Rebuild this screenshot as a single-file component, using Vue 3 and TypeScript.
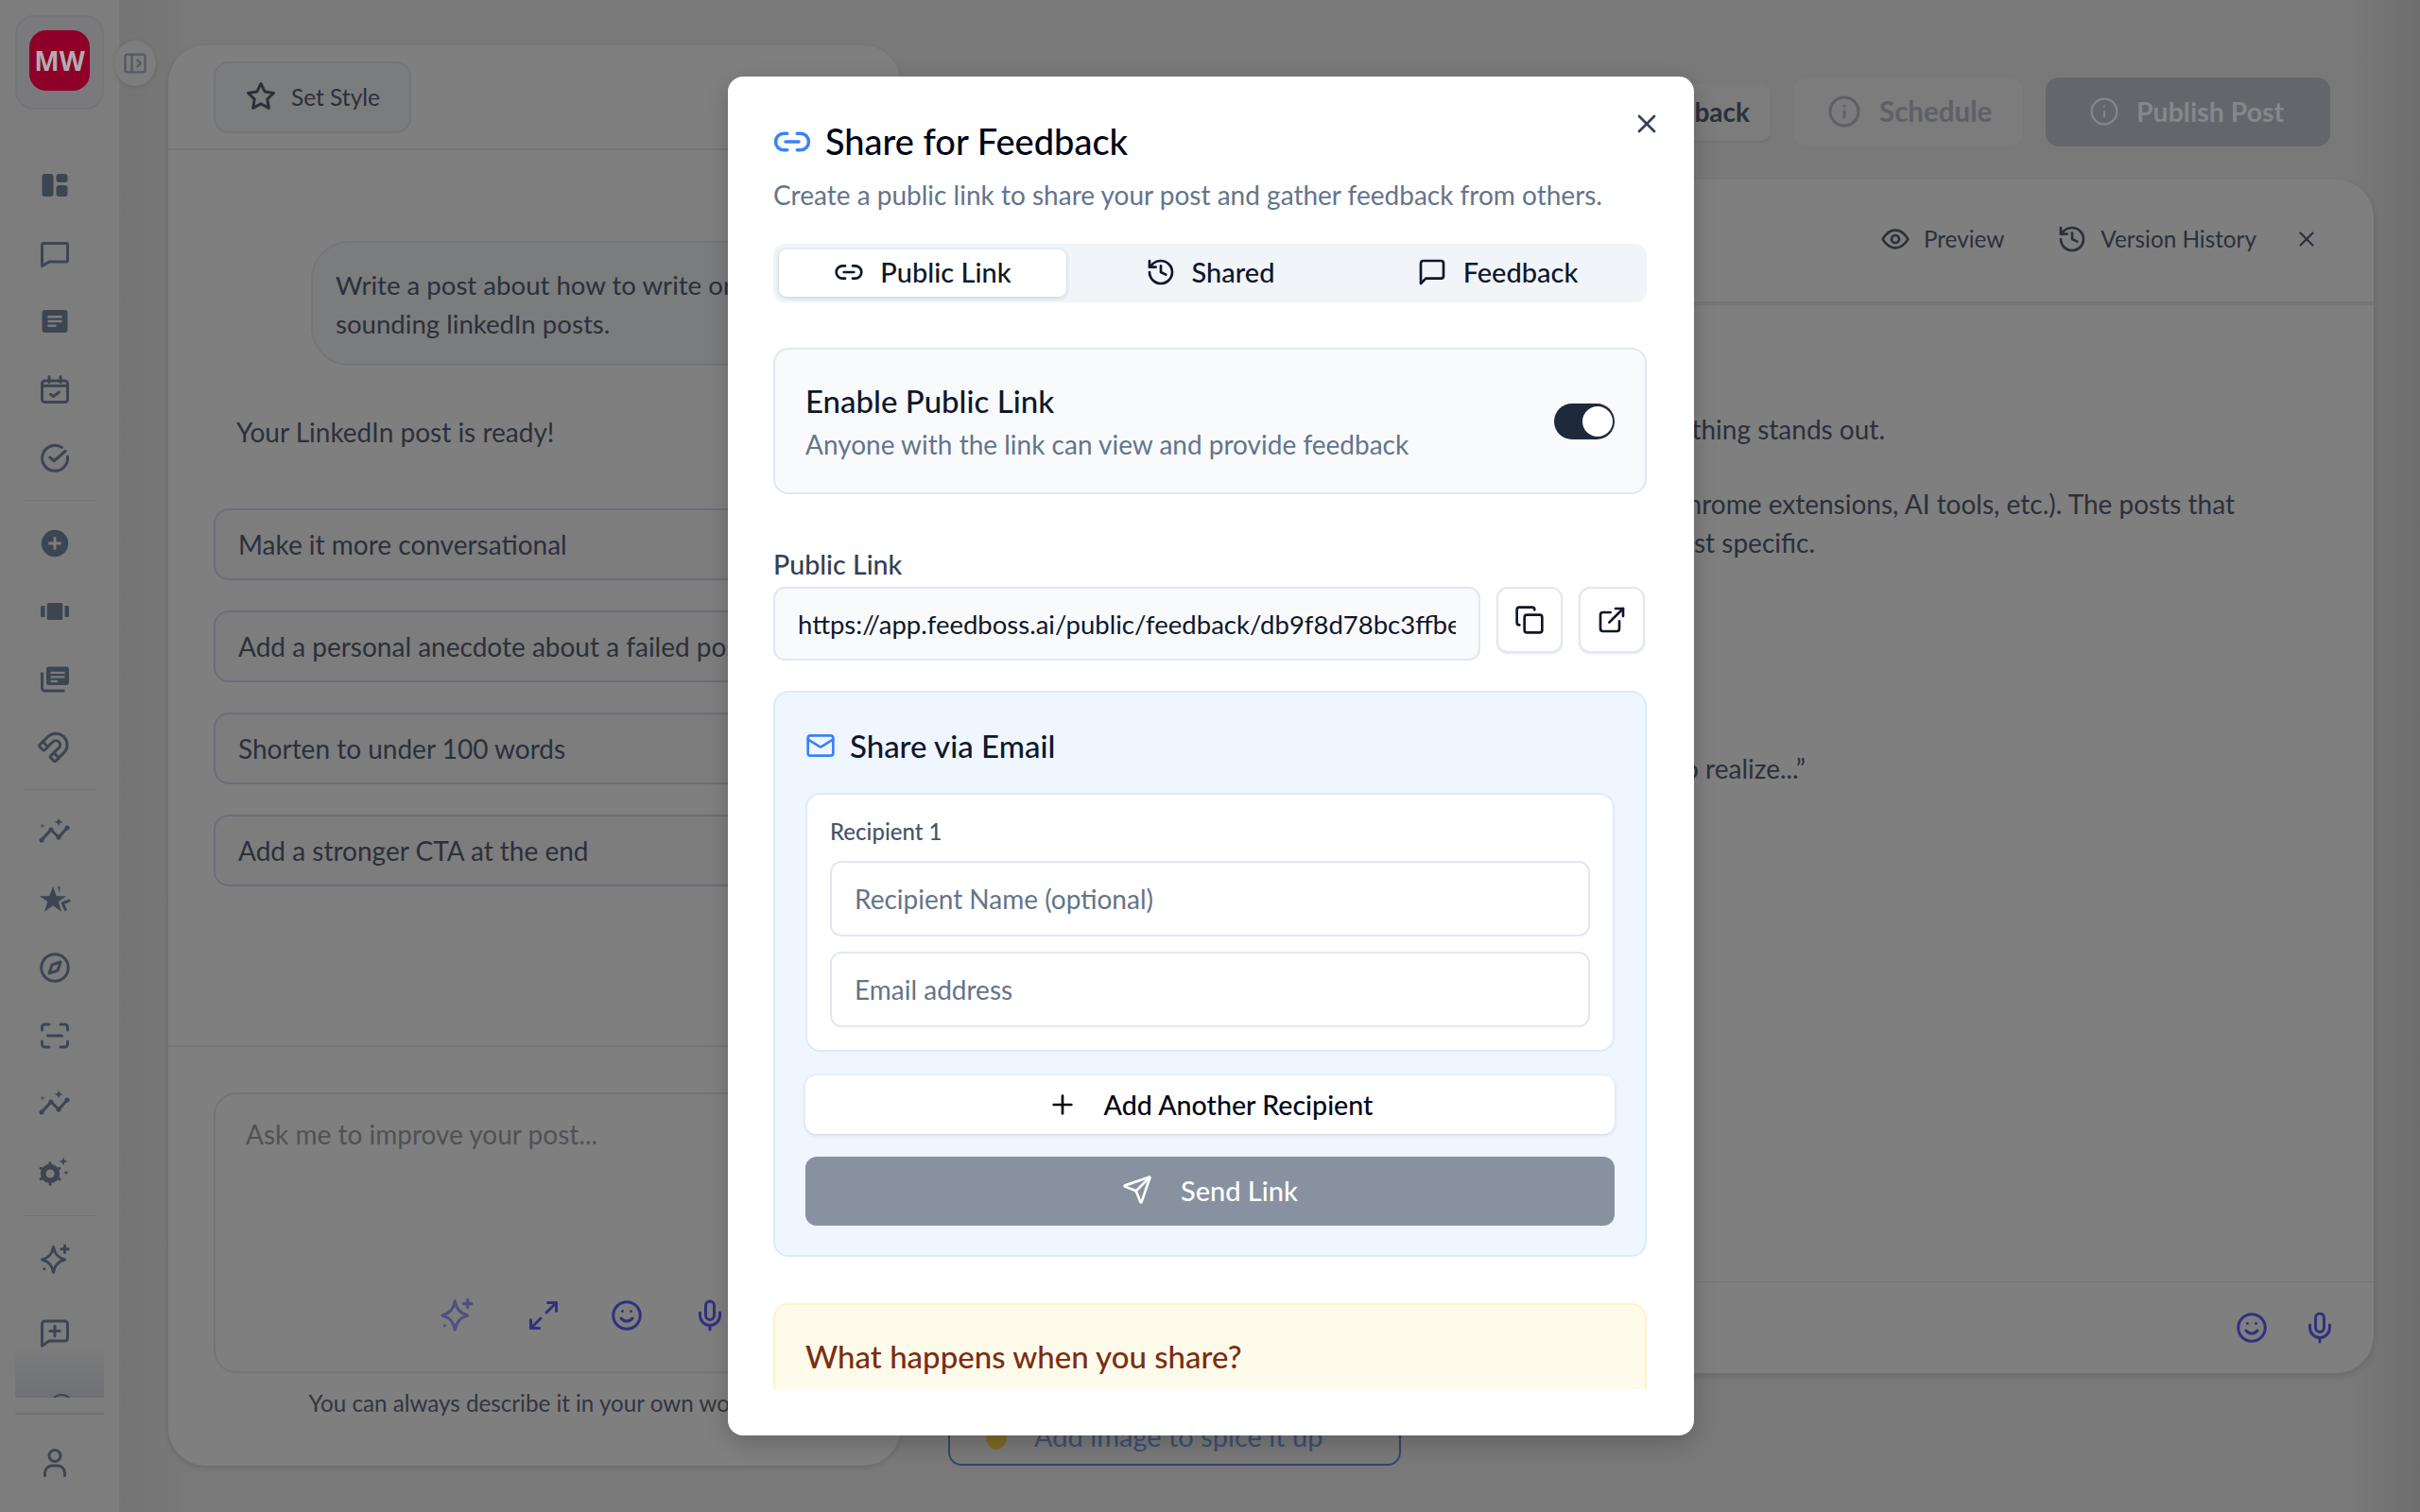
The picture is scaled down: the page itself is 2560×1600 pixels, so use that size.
<script setup lang="ts">
import { h } from 'vue'

type IconDef = { s?: string[]; f?: string[]; t?: string }

const icons: Record<string, IconDef> = {
  dashboard: { f: ['M5 4h4a2 2 0 0 1 2 2v12a2 2 0 0 1-2 2H5a2 2 0 0 1-2-2V6a2 2 0 0 1 2-2z', 'M15 4h4a2 2 0 0 1 2 2v2a2 2 0 0 1-2 2h-4a2 2 0 0 1-2-2V6a2 2 0 0 1 2-2z', 'M15 12h4a2 2 0 0 1 2 2v4a2 2 0 0 1-2 2h-4a2 2 0 0 1-2-2v-4a2 2 0 0 1 2-2z'] },
  message: { s: ['M4 5h16a1 1 0 0 1 1 1v11a1 1 0 0 1-1 1H8l-5 3V6a1 1 0 0 1 1-1z'] },
  article: { f: ['M5 4h14a2 2 0 0 1 2 2v12a2 2 0 0 1-2 2H5a2 2 0 0 1-2-2V6a2 2 0 0 1 2-2z M7 8v1.6h10V8z M7 11.2v1.6h10v-1.6z M7 14.4V16h6v-1.6z'] },
  calendar: { s: ['M5 6h14a2 2 0 0 1 2 2v11a2 2 0 0 1-2 2H5a2 2 0 0 1-2-2V8a2 2 0 0 1 2-2z', 'M8 3v4M16 3v4', 'M3 9.5h18', 'm9 15.5 2 1.5 4-3'] },
  circleCheck: { s: ['M21 11.5a9 9 0 1 1-4-6.5', 'M8.5 12l3 2.5 8-7'] },
  circlePlus: { f: ['M12 2.5a9.5 9.5 0 1 0 0 19 9.5 9.5 0 0 0 0-19z M11 7.5h2v3.5h3.5v2H13v3.5h-2V13H7.5v-2H11z'] },
  carousel: { f: ['M7.5 6h9a1 1 0 0 1 1 1v10a1 1 0 0 1-1 1h-9a1 1 0 0 1-1-1V7a1 1 0 0 1 1-1z', 'M3 8h2v8H3a1 1 0 0 1-1-1V9a1 1 0 0 1 1-1z', 'M19 8h2a1 1 0 0 1 1 1v6a1 1 0 0 1-1 1h-2z'] },
  news: { f: ['M8 3h12a2 2 0 0 1 2 2v9a2 2 0 0 1-2 2H8a2 2 0 0 1-2-2V5a2 2 0 0 1 2-2z M9 6.5V8h10V6.5z M9 9.5V11h10V9.5z M9 12.5V14h5v-1.5z', 'M2 7h2v11a1 1 0 0 0 1 1h14v2H5a3 3 0 0 1-3-3z'] },
  magnet: { t: 'translate(0 -1.2) rotate(225 12 12)', s: ['M4 13V5a1 1 0 0 1 1-1h3a1 1 0 0 1 1 1v8a2 2 0 0 0 6 0V5a1 1 0 0 1 1-1h3a1 1 0 0 1 1 1v8a8 8 0 0 1-16 0', 'M4 8h5', 'M15 8h5'] },
  chart: {
    s: ['M2.7 18 9.3 10.7 14.7 16 20.7 9.3'],
    f: [
      'M2.7 16.3a1.7 1.7 0 1 0 0 3.4 1.7 1.7 0 0 0 0-3.4z',
      'M9.3 9a1.7 1.7 0 1 0 0 3.4 1.7 1.7 0 0 0 0-3.4z',
      'M14.7 14.3a1.7 1.7 0 1 0 0 3.4 1.7 1.7 0 0 0 0-3.4z',
      'M20.7 7.6a1.7 1.7 0 1 0 0 3.4 1.7 1.7 0 0 0 0-3.4z',
      'M14.7 2.3l.8 2.2 2.2.8-2.2.8-.8 2.2-.8-2.2-2.2-.8 2.2-.8z',
      'M3.3 6l.4 1.6 1.6.4-1.6.4-.4 1.6-.4-1.6L1.3 8l1.6-.4z'
    ]
  },
  star: {
    f: ['M10.7 2.7l2.5 6.8H20l-5.5 4 2.2 7-6-4.3-6 4.3 2.2-7-5.7-4h6.9z', 'M14 2.5l1.8.5-.6 4.5z'],
    s: ['M22 12.7 17.5 14.5 19.5 19']
  },
  compass: { s: ['M21.5 12a9.5 9.5 0 1 1-19 0 9.5 9.5 0 0 1 19 0z', 'M16 8l-2 6-6 2 2-6z'] },
  scan: { s: ['M3 8V6a2 2 0 0 1 2-2h3', 'M16 4h3a2 2 0 0 1 2 2v2', 'M21 16v2a2 2 0 0 1-2 2h-3', 'M8 20H5a2 2 0 0 1-2-2v-2', 'M7 12h10'] },
  gear: {
    f: [
      'M8.7 6.5a6.8 6.8 0 1 0 0 13.6 6.8 6.8 0 0 0 0-13.6z M8.7 10.3a3 3 0 1 1 0 6 3 3 0 0 1 0-6z',
      'M18 1.7l.8 2.2 2.2.8-2.2.8-.8 2.2-.8-2.2-2.2-.8 2.2-.8z',
      'M20 10.7l.5 1.5 1.5.5-1.5.5-.5 1.5-.5-1.5-1.5-.5 1.5-.5z'
    ],
    s: ['M8.7 6.3v-.6', 'M8.7 20.3v.6', 'M14.76 9.8l.54-.3', 'M2.64 9.8l-.54-.3', 'M14.76 16.8l.54.3', 'M2.64 16.8l-.54.3']
  },
  sparkle: { s: ['M11 3c.8 5 3 7.5 8 9-5 1.5-7.2 4-8 9-.8-5-3-7.5-8-9 5-1.5 7.2-4 8-9z', 'M19 2v5M16.5 4.5h5', 'M4.5 18.5h.01'] },
  messagePlus: { s: ['M5 4h14a2 2 0 0 1 2 2v10a2 2 0 0 1-2 2H8l-5 3.5V6a2 2 0 0 1 2-2z', 'M12 7.5v7M8.5 11h7'] },
  user: { s: ['M12 3a4 4 0 1 0 0 8 4 4 0 0 0 0-8z', 'M5 21v-2a5 5 0 0 1 5-5h4a5 5 0 0 1 5 5v2'] },
  panel: { s: ['M5 4h14a2 2 0 0 1 2 2v12a2 2 0 0 1-2 2H5a2 2 0 0 1-2-2V6a2 2 0 0 1 2-2z', 'M9 4v16', 'M14 9l3 3-3 3'] },
  starLine: { s: ['M12 3l2.8 5.7 6.2.9-4.5 4.4 1.1 6.2-5.6-2.9-5.6 2.9 1.1-6.2L3 9.6l6.2-.9z'] },
  expand: { s: ['M15 3h6v6', 'M21 3l-7 7', 'M3 21l7-7', 'M3 15v6h6'] },
  smile: { s: ['M21.5 12a9.5 9.5 0 1 1-19 0 9.5 9.5 0 0 1 19 0z', 'M8 14s1.5 2 4 2 4-2 4-2', 'M9 9h.01M15 9h.01'] },
  mic: { s: ['M12 2a3 3 0 0 0-3 3v7a3 3 0 0 0 6 0V5a3 3 0 0 0-3-3z', 'M19 10v2a7 7 0 0 1-14 0v-2', 'M12 19v3'] },
  info: { s: ['M22 12a10 10 0 1 1-20 0 10 10 0 0 1 20 0z', 'M12 16v-4', 'M12 8h.01'] },
  eye: { s: ['M2 12s3.5-7 10-7 10 7 10 7-3.5 7-10 7-10-7-10-7z', 'M15 12a3 3 0 1 1-6 0 3 3 0 0 1 6 0z'] },
  history: { s: ['M3 12a9 9 0 1 0 9-9 9.75 9.75 0 0 0-6.74 2.74L3 8', 'M3 3v5h5', 'M12 7v5l4 2'] },
  close: { s: ['M18 6 6 18', 'M6 6l12 12'] },
  link: { s: ['M9 17H7A5 5 0 0 1 7 7h2', 'M15 7h2a5 5 0 1 1 0 10h-2', 'M8 12h8'] },
  square: { s: ['M21 15a2 2 0 0 1-2 2H7l-4 4V5a2 2 0 0 1 2-2h14a2 2 0 0 1 2 2z'] },
  copy: { s: ['M10 8h10a2 2 0 0 1 2 2v10a2 2 0 0 1-2 2H10a2 2 0 0 1-2-2V10a2 2 0 0 1 2-2z', 'M4 16a2 2 0 0 1-2-2V4a2 2 0 0 1 2-2h10a2 2 0 0 1 2 2'] },
  external: { s: ['M15 3h6v6', 'M10 14 21 3', 'M18 13v6a2 2 0 0 1-2 2H5a2 2 0 0 1-2-2V8a2 2 0 0 1 2-2h6'] },
  mail: { s: ['M4 4h16a2 2 0 0 1 2 2v12a2 2 0 0 1-2 2H4a2 2 0 0 1-2-2V6a2 2 0 0 1 2-2z', 'm22 7-8.97 5.7a1.94 1.94 0 0 1-2.06 0L2 7'] },
  plus: { s: ['M5 12h14', 'M12 5v14'] },
  send: { s: ['M14.536 21.686a.5.5 0 0 0 .937-.024l6.5-19a.496.496 0 0 0-.635-.635l-19 6.5a.5.5 0 0 0-.024.937l7.93 3.18a2 2 0 0 1 1.112 1.11z', 'm21.854 2.147-10.94 10.939'] }
}

const Ico = (props: { name: string }) => {
  const def = icons[props.name]
  const paths = [
    ...(def.f ?? []).map((d) => h('path', { d, fill: 'currentColor', stroke: 'none', 'fill-rule': 'evenodd' })),
    ...(def.s ?? []).map((d) => h('path', { d }))
  ]
  return h('svg', { viewBox: '0 0 24 24', class: 'ico' }, [def.t ? h('g', { transform: def.t }, paths) : paths])
}
Ico.props = ['name']

const navGroups = [
  ['dashboard', 'message', 'article', 'calendar', 'circleCheck'],
  ['circlePlus', 'carousel', 'news', 'magnet'],
  ['chart', 'star', 'compass', 'scan', 'chart', 'gear'],
  ['sparkle', 'messagePlus']
]

const suggestions = [
  'Make it more conversational',
  'Add a personal anecdote about a failed post',
  'Shorten to under 100 words',
  'Add a stronger CTA at the end'
]

const tabs = [
  { label: 'Public Link', icon: 'link', active: true },
  { label: 'Shared', icon: 'history', active: false },
  { label: 'Feedback', icon: 'square', active: false }
]
</script>

<template>
  <div class="page">
    <aside class="sidebar">
      <div class="logo-card"><div class="logo">MW</div></div>
      <nav class="nav">
        <div v-for="(group, i) in navGroups" :key="i" class="nav-group">
          <Ico v-for="(name, j) in group" :key="j" :name="name" class="nav-icon" />
        </div>
      </nav>
      <div class="nav-fade"><span class="nav-arc"></span></div>
      <div class="nav-user"><Ico name="user" class="nav-icon" /></div>
    </aside>
    <button class="collapse"><Ico name="panel" /></button>

    <main class="main">
      <section class="chat">
        <header class="chat-head">
          <button class="style-btn"><Ico name="starLine" />Set Style</button>
        </header>
        <div class="chat-body">
          <div class="bubble">Write a post about how to write original and human<br />sounding linkedIn posts.</div>
          <p class="ready">Your LinkedIn post is ready!</p>
          <div class="suggestions">
            <div v-for="s in suggestions" :key="s" class="suggestion">{{ s }}</div>
          </div>
        </div>
        <footer class="composer">
          <div class="composer-box">
            <div class="composer-hint">Ask me to improve your post...</div>
            <div class="composer-tools">
              <Ico name="sparkle" class="faint" />
              <Ico name="expand" />
              <Ico name="smile" />
              <Ico name="mic" />
            </div>
          </div>
          <p class="caption">You can always describe it in your own words</p>
        </footer>
      </section>

      <section class="editor">
        <div class="topbar">
          <button class="btn-feedback">Feedback</button>
          <button class="btn-schedule"><Ico name="info" />Schedule</button>
          <button class="btn-publish"><Ico name="info" />Publish Post</button>
        </div>
        <div class="editor-card">
          <div class="editor-head">
            <span class="head-item"><Ico name="eye" />Preview</span>
            <span class="head-item"><Ico name="history" />Version History</span>
            <Ico name="close" class="head-close" />
          </div>
          <div class="editor-body">
            <p class="line l1">Most LinkedIn posts sound the same, and nothing stands out.</p>
            <p class="line l2">I've tried all of the usual chrome extensions, AI tools, etc.). The posts that</p>
            <p class="line l3">worked were the ones that were the most specific.</p>
            <p class="line l4">“It took me far too long to realize...”</p>
          </div>
          <div class="editor-foot">
            <Ico name="smile" />
            <Ico name="mic" />
          </div>
        </div>
        <button class="add-image"><span class="add-dot"></span>Add image to spice it up</button>
      </section>
    </main>

    <div class="overlay">
      <div class="modal">
        <button class="modal-close"><Ico name="close" /></button>
        <div class="modal-title"><Ico name="link" class="title-icon" /><h2>Share for Feedback</h2></div>
        <p class="modal-sub">Create a public link to share your post and gather feedback from others.</p>
        <div class="modal-scroll">
          <div class="tabs">
            <div v-for="t in tabs" :key="t.label" class="tab" :class="{ active: t.active }">
              <Ico :name="t.icon" />{{ t.label }}
            </div>
          </div>

          <div class="enable">
            <div>
              <div class="enable-title">Enable Public Link</div>
              <div class="enable-desc">Anyone with the link can view and provide feedback</div>
            </div>
            <div class="toggle"><span class="knob"></span></div>
          </div>

          <label class="link-label">Public Link</label>
          <div class="link-row">
            <div class="link-input"><span>https://app.feedboss.ai/public/feedback/db9f8d78bc3ffbe24a61c07e</span></div>
            <button class="icon-btn"><Ico name="copy" /></button>
            <button class="icon-btn"><Ico name="external" /></button>
          </div>

          <div class="email">
            <div class="email-title"><Ico name="mail" />Share via Email</div>
            <div class="recipient">
              <div class="recipient-label">Recipient 1</div>
              <div class="field">Recipient Name (optional)</div>
              <div class="field">Email address</div>
            </div>
            <button class="add-recipient"><Ico name="plus" />Add Another Recipient</button>
            <button class="send"><Ico name="send" />Send Link</button>
          </div>

          <div class="notice">What happens when you share?</div>
        </div>
      </div>
    </div>
  </div>
</template>

<style>
html,
body {
  margin: 0;
}
</style>

<style scoped>
.page {
  position: relative;
  display: flex;
  width: 2560px;
  height: 1600px;
  overflow: hidden;
  font-family: Lato, 'Open Sans', sans-serif;
  color: #586074;
  background: #f2f2f3;
}
button {
  font-family: inherit;
  border: none;
  background: none;
  padding: 0;
}
.ico {
  display: block;
  width: 36px;
  height: 36px;
  flex: none;
  overflow: visible;
  fill: none;
  stroke: currentColor;
  stroke-width: 2;
  stroke-linecap: round;
  stroke-linejoin: round;
}

/* sidebar */
.sidebar {
  width: 128px;
  flex: none;
  display: flex;
  flex-direction: column;
  align-items: center;
  padding-top: 16px;
  box-sizing: border-box;
  background: #fafafb;
  border-right: 2px solid #eaebee;
}
.logo-card {
  width: 94px;
  height: 100px;
  box-sizing: border-box;
  display: flex;
  align-items: center;
  justify-content: center;
  padding-bottom: 4px;
  background: #f4f5f8;
  border: 2px solid #e8eaef;
  border-radius: 20px;
}
/* the reference's logo stays brighter than a plain 50% dim would leave it */
.logo {
  position: relative;
  z-index: 2;
  width: 64px;
  height: 64px;
  border-radius: 18px;
  background: #8f0028;
  color: #aeaeae;
  font-size: 28px;
  font-weight: 700;
  display: flex;
  align-items: center;
  justify-content: center;
  font-family: 'Open Sans', sans-serif;
}
.nav {
  display: flex;
  flex-direction: column;
  margin-top: 62px;
  width: 78px;
}
.nav-group {
  display: flex;
  flex-direction: column;
  gap: 36px;
  align-items: center;
  padding-bottom: 27px;
  margin-bottom: 27px;
  border-bottom: 1px solid #e8e9ec;
}
.nav-group:nth-child(2) {
  padding-bottom: 26px;
  margin-bottom: 26px;
}
.nav-group:nth-child(3) {
  padding-bottom: 28px;
  margin-bottom: 28px;
}
.nav-group:last-child {
  border-bottom: none;
  margin-bottom: 0;
  padding-bottom: 0;
  gap: 41px;
}
.nav-icon {
  color: #7a8aa5;
  margin-left: -10px;
}
.nav-fade {
  width: 94px;
  height: 57px;
  margin-top: -6px;
  background: linear-gradient(#fafafb00, #dfe2e8);
  position: relative;
  overflow: hidden;
}
.nav-arc {
  position: absolute;
  left: 36px;
  top: 53px;
  width: 22px;
  height: 22px;
  border-radius: 50%;
  border: 2px solid #7a8aa5;
}
.nav-user {
  width: 94px;
  margin-top: 16px;
  padding-top: 33px;
  border-top: 2px solid #e0e2e6;
  display: flex;
  justify-content: center;
}
.collapse {
  position: absolute;
  left: 121px;
  top: 43px;
  width: 44px;
  height: 48px;
  border-radius: 50%;
  background: #fbfbfc;
  box-shadow: 0 1px 5px #0002;
  display: flex;
  align-items: center;
  justify-content: center;
  color: #a9b4c8;
}
.collapse .ico {
  width: 28px;
  height: 28px;
}

/* main */
.main {
  flex: 1;
  min-width: 0;
  display: flex;
  gap: 50px;
  padding: 48px 49px 49px 50px;
  box-sizing: border-box;
  background: linear-gradient(90deg, #e6e7e9 0, #f3f3f4 3%, #f3f3f4 97%, #dbdbdc 100%);
}
.chat {
  width: 775px;
  flex: none;
  display: flex;
  flex-direction: column;
  background: #fff;
  border-radius: 40px;
  box-shadow: 0 2px 6px #0002;
}
.chat-head {
  height: 111px;
  padding: 17px 48px 0;
  box-sizing: border-box;
  border-bottom: 2px solid #e9ebf2;
}
.style-btn {
  width: 209px;
  height: 76px;
  box-sizing: border-box;
  display: flex;
  align-items: center;
  gap: 14px;
  padding: 0 0 2px 30px;
  font-size: 24.5px;
  color: #586074;
  background: #f6f8fb;
  border: 2px solid #e8ebf1;
  border-radius: 16px;
}
.chat-body {
  flex: 1;
  padding: 96px 48px 0;
}
.bubble {
  margin-left: 103px;
  height: 132px;
  box-sizing: border-box;
  padding: 24px 24px;
  font-size: 27.6px;
  line-height: 41px;
  background: #f7f8fb;
  border: 2px solid #e8ebf1;
  border-radius: 40px;
  white-space: nowrap;
  overflow: hidden;
}
.ready {
  margin: 50px 0 0 24px;
  font-size: 28px;
  line-height: 41px;
}
.suggestions {
  display: flex;
  flex-direction: column;
  gap: 32px;
  margin-top: 60px;
}
.suggestion {
  height: 76px;
  box-sizing: border-box;
  display: flex;
  align-items: center;
  padding-left: 24px;
  font-size: 28px;
  border: 2px solid #dcd8f0;
  border-radius: 16px;
  background: #fafafd;
}
.composer {
  border-top: 2px solid #e8e9ec;
  padding: 48px 48px 0;
  height: 445px;
  box-sizing: border-box;
}
.composer-box {
  height: 297px;
  box-sizing: border-box;
  border: 2px solid #e8e9ec;
  border-radius: 24px;
  padding: 22px 134px 0 32px;
  display: flex;
  flex-direction: column;
}
.composer-hint {
  font-size: 28px;
  line-height: 40px;
  color: #a1a3a8;
}
.composer-tools {
  margin-top: 152px;
  height: 40px;
  display: flex;
  align-items: center;
  justify-content: flex-end;
  gap: 52px;
  color: #6461ff;
}
.composer-tools .faint {
  width: 40px;
  height: 40px;
  opacity: 0.6;
  margin-right: 2px;
}
.caption {
  margin: 14px 0 0;
  text-align: center;
  font-size: 24.2px;
  line-height: 36px;
  color: #666c7c;
}

/* right */
.editor {
  flex: 1;
  min-width: 0;
  display: flex;
  flex-direction: column;
}
.topbar {
  height: 73px;
  margin-top: 34px;
  display: flex;
  align-items: center;
  justify-content: flex-end;
  gap: 25px;
  padding-right: 46px;
}
.btn-feedback {
  width: 260px;
  height: 61px;
  font-size: 28px;
  font-weight: 700;
  color: #586074;
  display: flex;
  align-items: center;
  justify-content: flex-end;
  padding: 0 22px 2px 0;
  box-sizing: border-box;
  background: #f9f9fa;
  border-radius: 10px;
  box-shadow: 0 1px 3px #0002;
}
.btn-schedule,
.btn-publish {
  height: 73px;
  display: flex;
  align-items: center;
  box-sizing: border-box;
  padding-bottom: 2px;
  font-size: 29.5px;
  font-weight: 700;
  border-radius: 14px;
}
.btn-schedule {
  width: 241px;
  gap: 19px;
  padding-left: 33px;
  color: #bfc1cc;
  border: 2px solid #fafafb;
  background: #f8f8f9;
}
/* sits above the dim layer too, same reason as the logo */
.btn-publish {
  position: relative;
  z-index: 2;
  width: 301px;
  gap: 18px;
  padding-left: 46px;
  font-size: 28.5px;
  color: #86878c;
  background: #65666b;
}
.btn-publish .ico {
  width: 32px;
  height: 32px;
  stroke-width: 1.6;
}
.editor-card {
  height: 1263px;
  margin-top: 35px;
  flex: none;
  display: flex;
  flex-direction: column;
  background: #fff;
  border-radius: 40px;
  box-shadow: 0 3px 8px #0002;
}
.editor-head {
  height: 133px;
  flex: none;
  box-sizing: border-box;
  border-bottom: 4px solid #e8ecf1;
  display: flex;
  align-items: center;
  justify-content: flex-end;
  padding: 0 58px 4px 0;
  font-size: 24.3px;
  gap: 56px;
}
.head-item {
  display: flex;
  align-items: center;
  gap: 14px;
}
.head-item .ico {
  width: 32px;
  height: 32px;
}
.head-close {
  width: 26px;
  height: 26px;
  margin-left: -16px;
}
.editor-body {
  flex: 1;
  padding-top: 111px;
}
.line {
  margin: 0;
  display: flex;
  justify-content: flex-end;
  white-space: nowrap;
  font-size: 28px;
  line-height: 41px;
}
.l1 {
  padding-right: 517px;
}
.l2 {
  margin-top: 38px;
  padding-right: 147px;
}
.l3 {
  padding-right: 591px;
}
.l4 {
  margin-top: 198px;
  padding-right: 601px;
}
.editor-foot {
  height: 96px;
  flex: none;
  border-top: 1px solid #e9e9eb;
  display: flex;
  align-items: center;
  justify-content: flex-end;
  gap: 36px;
  padding: 0 39px 0 0;
  color: #6461ff;
}
.add-image {
  width: 479px;
  height: 72px;
  margin-top: 27px;
  box-sizing: border-box;
  display: flex;
  align-items: center;
  gap: 29px;
  padding: 8px 0 0 38px;
  font-size: 29px;
  color: #7a9ee0;
  border: 2px solid #6a8fd0;
  border-radius: 14px;
}
.add-dot {
  width: 22px;
  height: 28px;
  border-radius: 50%;
  background: #ffd050;
}

/* modal */
.overlay {
  position: absolute;
  inset: 0;
  z-index: 1;
  background: rgba(0, 0, 0, 0.5);
  display: flex;
  align-items: center;
  justify-content: center;
  color: #0f172a;
}
.modal {
  position: relative;
  width: 1022px;
  height: 1438px;
  margin-left: 2px;
  box-sizing: border-box;
  display: flex;
  flex-direction: column;
  padding: 48px 50px 49px 48px;
  background: #fff;
  border-radius: 16px;
  box-shadow: 0 8px 24px #0003;
}
.modal-close {
  position: absolute;
  top: 34px;
  right: 34px;
  width: 32px;
  height: 32px;
  color: #334155;
}
.modal-close .ico {
  width: 32px;
  height: 32px;
}
.modal-title {
  display: flex;
  align-items: center;
  gap: 14px;
}
.title-icon {
  width: 42px;
  height: 42px;
  color: #3b82f6;
  margin-left: -1px;
}
h2 {
  margin: -2px 0 0;
  font-size: 38px;
  line-height: 42px;
  font-weight: 500;
  color: #020617;
}
.modal-sub {
  margin: 15px 0 0;
  font-size: 28px;
  line-height: 40px;
  color: #64748b;
}
.modal-scroll {
  flex: 1;
  min-height: 0;
  overflow: hidden;
}
.tabs {
  margin-top: 32px;
  height: 62px;
  box-sizing: border-box;
  padding: 6px;
  display: grid;
  grid-template-columns: repeat(3, 1fr);
  background: #f1f5f9;
  border-radius: 12px;
}
.tab {
  display: flex;
  align-items: center;
  justify-content: center;
  gap: 17px;
  padding-bottom: 3px;
  font-size: 29px;
  font-weight: 500;
  border-radius: 8px;
}
.tab .ico {
  width: 32px;
  height: 32px;
}
.tab.active {
  background: #fff;
  box-shadow: 0 1px 4px #0f172a33;
}
.enable {
  margin-top: 48px;
  height: 155px;
  box-sizing: border-box;
  display: flex;
  align-items: center;
  justify-content: space-between;
  padding: 0 32px;
  background: #f8fafc;
  border: 2px solid #e2e8f0;
  border-radius: 16px;
}
.enable-title {
  font-size: 33px;
  line-height: 44px;
  font-weight: 500;
}
.enable-desc {
  margin-top: 4px;
  font-size: 28px;
  line-height: 40px;
  color: #64748b;
}
.toggle {
  width: 64px;
  height: 38px;
  border-radius: 19px;
  background: #1e293b;
  display: flex;
  align-items: center;
  justify-content: flex-end;
  padding-right: 2px;
  box-sizing: border-box;
}
.knob {
  width: 32px;
  height: 32px;
  border-radius: 50%;
  background: #fff;
}
.link-label {
  display: block;
  margin-top: 54px;
  font-size: 28.6px;
  line-height: 40px;
  font-weight: 500;
  color: #334155;
}
.link-row {
  margin-top: 4px;
  display: flex;
  align-items: flex-start;
  gap: 17px;
}
.link-input {
  width: 748px;
  height: 78px;
  box-sizing: border-box;
  display: flex;
  align-items: center;
  padding: 0 24px;
  font-size: 27.5px;
  white-space: nowrap;
  background: #f8fafc;
  border: 2px solid #e2e8f0;
  border-radius: 12px;
}
.link-input span {
  overflow: hidden;
}
.icon-btn {
  width: 70px;
  height: 70px;
  display: flex;
  align-items: center;
  justify-content: center;
  color: #0f172a;
  border: 2px solid #e2e8f0;
  border-radius: 12px;
  box-sizing: border-box;
  background: #fff;
  box-shadow: 0 1px 2px #0f172a1a;
}
.icon-btn .ico {
  width: 32px;
  height: 32px;
}
.email {
  margin-top: 32px;
  padding: 36px 32px 31px;
  background: #eff6ff;
  border: 2px solid #dbeafe;
  border-radius: 16px;
}
.email-title {
  display: flex;
  align-items: center;
  gap: 15px;
  height: 40px;
  font-size: 33px;
  line-height: 42px;
  font-weight: 500;
}
.email-title .ico {
  width: 32px;
  height: 32px;
  color: #3b82f6;
}
.recipient {
  margin-top: 30px;
  height: 274px;
  box-sizing: border-box;
  padding: 22px 24px 0;
  background: #fff;
  border: 2px solid #dbeafe;
  border-radius: 16px;
}
.recipient-label {
  font-size: 24px;
  line-height: 34px;
  font-weight: 500;
  color: #475569;
}
.field {
  margin-top: 16px;
  height: 80px;
  box-sizing: border-box;
  display: flex;
  align-items: center;
  padding-left: 24px;
  font-size: 28px;
  color: #64748b;
  border: 2px solid #e2e8f0;
  border-radius: 12px;
}
.recipient-label + .field {
  margin-top: 14px;
}
.add-recipient {
  margin-top: 25px;
  width: 100%;
  height: 62px;
  display: flex;
  align-items: center;
  justify-content: center;
  gap: 28px;
  font-size: 28.6px;
  font-weight: 500;
  color: #020617;
  background: #fff;
  border-radius: 12px;
  box-shadow: 0 1px 4px #0f172a26;
}
.add-recipient .ico,
.send .ico {
  width: 32px;
  height: 32px;
}
.send {
  margin-top: 24px;
  width: 100%;
  height: 73px;
  display: flex;
  align-items: center;
  justify-content: center;
  gap: 30px;
  padding-bottom: 3px;
  font-size: 29px;
  font-weight: 500;
  color: #fff;
  background: #8891a0;
  border-radius: 12px;
}
.notice {
  margin-top: 49px;
  height: 160px;
  box-sizing: border-box;
  padding: 32px 32px;
  font-size: 33px;
  line-height: 44px;
  font-weight: 500;
  color: #7c2d12;
  background: #fffbeb;
  border: 2px solid #fef3c7;
  border-radius: 16px;
}
</style>
